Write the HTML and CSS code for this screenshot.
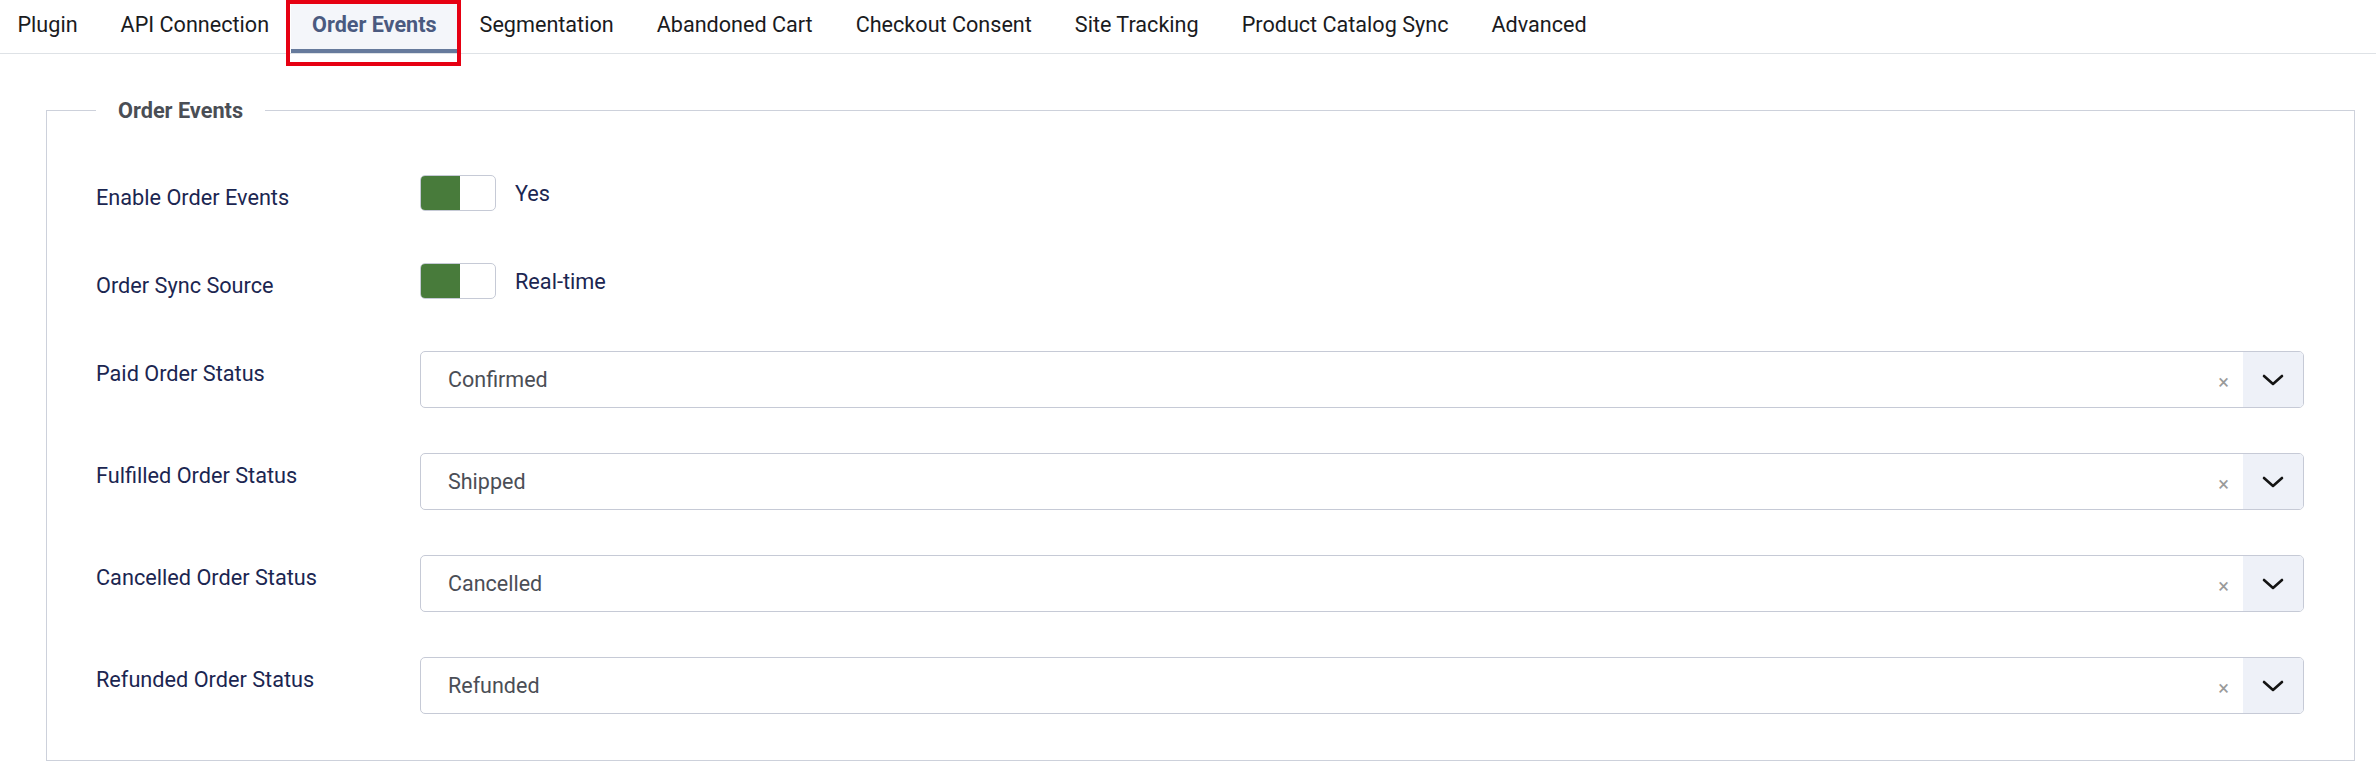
FILE: index.html
```html
<!DOCTYPE html>
<html lang="en">
<head>
    <meta charset="UTF-8">
    <meta name="viewport" content="width=device-width, initial-scale=1.0">
    <title>Order Events</title>
    <link rel="stylesheet" href="styles.css">
</head>
<body>
    <nav class="tabs">
        <button class="tab">Plugin</button>
        <button class="tab">API Connection</button>
        <button class="tab active">Order Events<span class="highlight"></span></button>
        <button class="tab">Segmentation</button>
        <button class="tab">Abandoned Cart</button>
        <button class="tab">Checkout Consent</button>
        <button class="tab">Site Tracking</button>
        <button class="tab">Product Catalog Sync</button>
        <button class="tab">Advanced</button>
    </nav>

    <fieldset class="options">
        <legend>Order Events</legend>

        <div class="control-group switch-row">
            <div class="control-label">Enable Order Events</div>
            <div class="switcher">
                <span class="toggle"><span class="toggle-on"></span></span>
                <span class="switcher-text">Yes</span>
            </div>
        </div>

        <div class="control-group switch-row">
            <div class="control-label">Order Sync Source</div>
            <div class="switcher">
                <span class="toggle"><span class="toggle-on"></span></span>
                <span class="switcher-text">Real-time</span>
            </div>
        </div>

        <div class="control-group">
            <div class="control-label">Paid Order Status</div>
            <div class="choices">
                <span class="choices-value">Confirmed</span>
                <span class="choices-remove">&times;</span>
                <span class="choices-arrow"><svg width="22" height="12" viewBox="0 0 22 12"><polyline points="2,2 11,10 20,2" fill="none" stroke="#141414" stroke-width="2.6" stroke-linecap="round" stroke-linejoin="round"/></svg></span>
            </div>
        </div>

        <div class="control-group">
            <div class="control-label">Fulfilled Order Status</div>
            <div class="choices">
                <span class="choices-value">Shipped</span>
                <span class="choices-remove">&times;</span>
                <span class="choices-arrow"><svg width="22" height="12" viewBox="0 0 22 12"><polyline points="2,2 11,10 20,2" fill="none" stroke="#141414" stroke-width="2.6" stroke-linecap="round" stroke-linejoin="round"/></svg></span>
            </div>
        </div>

        <div class="control-group">
            <div class="control-label">Cancelled Order Status</div>
            <div class="choices">
                <span class="choices-value">Cancelled</span>
                <span class="choices-remove">&times;</span>
                <span class="choices-arrow"><svg width="22" height="12" viewBox="0 0 22 12"><polyline points="2,2 11,10 20,2" fill="none" stroke="#141414" stroke-width="2.6" stroke-linecap="round" stroke-linejoin="round"/></svg></span>
            </div>
        </div>

        <div class="control-group">
            <div class="control-label">Refunded Order Status</div>
            <div class="choices">
                <span class="choices-value">Refunded</span>
                <span class="choices-remove">&times;</span>
                <span class="choices-arrow"><svg width="22" height="12" viewBox="0 0 22 12"><polyline points="2,2 11,10 20,2" fill="none" stroke="#141414" stroke-width="2.6" stroke-linecap="round" stroke-linejoin="round"/></svg></span>
            </div>
        </div>
    </fieldset>
</body>
</html>
```

FILE: styles.css
```css
body {
    font-family: 'Roboto', sans-serif;
    margin: 0;
    padding: 0;
    background-color: #fff;
    color: #1b2651;
}

/* tab bar */
.tabs {
    display: flex;
    height: 53px;
    margin-left: -4px;
    border-bottom: 1px solid #dee2e6;
}

.tab {
    position: relative;
    display: flex;
    align-items: center;
    padding: 0 21.5px 4px;
    border: none;
    background: none;
    font-family: inherit;
    font-size: 21.6px;
    color: #1a1b1e;
    cursor: pointer;
}

.tab.active {
    background-color: #f4f6fa;
    color: #4a5a80;
    font-weight: 700;
    box-shadow: inset 0 -4px 0 #667a9c;
}

.tab .highlight {
    position: absolute;
    left: -5px;
    right: -3px;
    top: 0;
    height: 66px;
    box-sizing: border-box;
    border: 4px solid #e60012;
    pointer-events: none;
}

/* options fieldset */
.options {
    margin: 44px 21px 0 46px;
    padding: 52px 50px 46px 49px;
    border: 1px solid #cdd1db;
    min-inline-size: auto;
}

.options legend {
    padding: 0 22px;
    font-size: 21.7px;
    font-weight: 700;
    color: #4a4e55;
}

.control-group {
    display: flex;
    margin-bottom: 45px;
}

.control-group:last-child {
    margin-bottom: 0;
}

.control-group.switch-row {
    margin-bottom: 52px;
}

.control-label {
    flex: 0 0 324px;
    padding-top: 10px;
    font-size: 21.7px;
    color: #1b2651;
}

/* switcher */
.switcher {
    display: flex;
    align-items: center;
    gap: 19px;
    height: 36px;
}

.toggle {
    display: block;
    width: 76px;
    height: 36px;
    box-sizing: border-box;
    border: 1px solid #c6cad6;
    border-radius: 5px;
    background: #fff;
    overflow: hidden;
}

.toggle-on {
    display: block;
    width: 39px;
    height: 100%;
    background-color: #487b3b;
}

.switcher-text {
    font-size: 21.7px;
    color: #1b2651;
}

/* choices select */
.choices {
    flex: 1;
    display: flex;
    align-items: center;
    height: 57px;
    box-sizing: border-box;
    border: 1px solid #c6cad6;
    border-radius: 5px;
    background: #fff;
}

.choices-value {
    flex: 1;
    padding-left: 27px;
    font-size: 21.5px;
    color: #4b4e56;
}

.choices-remove {
    margin-right: 14px;
    font-size: 20px;
    color: #9a9a9a;
    line-height: 1;
    padding-top: 4px;
}

.choices-arrow {
    display: flex;
    align-items: center;
    justify-content: center;
    width: 60px;
    height: 100%;
    background-color: #eef1f8;
    border-radius: 0 4px 4px 0;
}
```
